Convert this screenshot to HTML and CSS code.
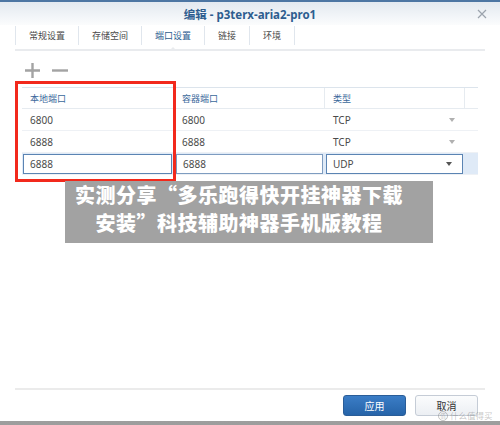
FILE: index.html
```html
<!DOCTYPE html>
<html lang="zh">
<head>
    <meta charset="UTF-8">
    <meta name="viewport" content="width=device-width, initial-scale=1.0">
    <title>编辑 - p3terx-aria2-pro1</title>
    <link rel="stylesheet" href="styles.css">
</head>
<body>
    <div class="window">
        <div class="titlebar">
            <span></span>
            <h1>编辑 - p3terx-aria2-pro1</h1>
            <span class="close">
                <svg width="10" height="10" viewBox="0 0 10 10"><path d="M1 1L9 9M9 1L1 9" stroke="#9ba3ad" stroke-width="1.2" fill="none"/></svg>
            </span>
        </div>

        <div class="tabs">
            <div class="tab">常规设置</div>
            <div class="tab">存储空间</div>
            <div class="tab active">端口设置</div>
            <div class="tab">链接</div>
            <div class="tab">环境</div>
        </div>

        <div class="content">
            <div class="toolbar">
                <span class="tool">
                    <svg width="15" height="15" viewBox="0 0 15 15"><path d="M7.5 0V15M0 7.5H15" stroke="#a3a3a3" stroke-width="2.4" fill="none"/></svg>
                </span>
                <span class="tool">
                    <svg width="16" height="15" viewBox="0 0 16 15"><path d="M0 7.5H16" stroke="#a3a3a3" stroke-width="2.4" fill="none"/></svg>
                </span>
            </div>

            <div class="grid">
                <div class="row head">
                    <div class="cell">本地端口</div>
                    <div class="cell">容器端口</div>
                    <div class="cell">类型</div>
                    <div class="cell"></div>
                </div>
                <div class="row">
                    <div class="cell">6800</div>
                    <div class="cell">6800</div>
                    <div class="cell type">TCP <span class="caret"></span></div>
                    <div class="cell"></div>
                </div>
                <div class="row">
                    <div class="cell">6888</div>
                    <div class="cell">6888</div>
                    <div class="cell type">TCP <span class="caret"></span></div>
                    <div class="cell"></div>
                </div>
                <div class="row selected">
                    <div class="cell"><div class="field w1">6888</div></div>
                    <div class="cell"><div class="field w2">6888</div></div>
                    <div class="cell"><div class="field w3 select">UDP <span class="caret dark"></span></div></div>
                    <div class="cell"></div>
                </div>
            </div>
        </div>

        <div class="footer">
            <button class="btn primary">应用</button>
            <button class="btn">取消</button>
        </div>

        <div class="mark-box"></div>

        <div class="banner">
            实测分享“多乐跑得快开挂神器下载<br>安装”科技辅助神器手机版教程
        </div>

        <div class="watermark"><span class="wm-icon">值</span>什么值得买</div>
    </div>
</body>
</html>
```

FILE: styles.css
```css
* {
    margin: 0;
    padding: 0;
    box-sizing: border-box;
}

body {
    width: 500px;
    height: 425px;
    overflow: hidden;
    background: linear-gradient(#c4c4c4, #9d9d9d);
    font-family: "Noto Sans", "Noto Sans CJK SC", sans-serif;
    color: #444;
}

.window {
    position: relative;
    width: 500px;
    height: 421px;
    background: white;
    display: flex;
    flex-direction: column;
}

.titlebar {
    height: 25px;
    border-top: 2px solid #4d76a3;
    background: linear-gradient(#e3e9f0, #fbfcfd);
    display: grid;
    grid-template-columns: 1fr auto 1fr;
    align-items: center;
}

.titlebar h1 {
    font-size: 11.5px;
    font-weight: 700;
    color: #2d5d8f;
}

.close {
    justify-self: end;
    margin-right: 13px;
    display: flex;
}

.tabs {
    margin: 1px 15px 0;
    height: 25px;
    border-bottom: 2px solid #e9ebee;
    display: flex;
}

.tab {
    position: relative;
    height: 19px;
    line-height: 19px;
    padding: 0 13px;
    font-size: 9px;
    color: #4a4a4a;
    border-left: 1px solid #e0e6ed;
}

.tab:last-child {
    border-right: 1px solid #e0e6ed;
}

.tab.active {
    color: #2d5d8f;
}

.tab.active::after {
    content: "";
    position: absolute;
    left: 50%;
    bottom: -6px;
    margin-left: -4px;
    border: 4px solid transparent;
    border-bottom: 4px solid #e9ebee;
    border-top: 0;
}

.content {
    padding: 0 22px;
}

.toolbar {
    display: flex;
    gap: 12px;
    padding: 12px 0 0 3px;
    height: 36px;
}

.tool {
    display: flex;
}

.grid {
    width: 456px;
    border-top: 1px solid #dce4ec;
}

.row {
    display: grid;
    grid-template-columns: 153px 150px 140px 13px;
    height: 22px;
    border-bottom: 1px solid #eef1f5;
    font-size: 10px;
    color: #4a4a4a;
}

.row.head {
    height: 21px;
    font-size: 9px;
    color: #3a689b;
    border-bottom-color: #e6ebf0;
}

.cell {
    display: flex;
    align-items: center;
    padding-left: 8px;
}

.row.head .cell {
    border-right: 1px solid #e6ebf0;
}

.row.head .cell:last-child {
    border-right: none;
}

.row .cell:nth-child(2) {
    padding-left: 7px;
}

.cell.type {
    justify-content: space-between;
    padding-right: 10px;
}

.caret {
    width: 0;
    height: 0;
    border-left: 3px solid transparent;
    border-right: 3px solid transparent;
    border-top: 4px solid #b0b0b0;
}

.caret.dark {
    border-top-color: #555;
}

.row.selected {
    background: #dfeaf7;
}

.row.selected .cell {
    padding-left: 1px;
}

.field {
    height: 20px;
    background: white;
    border: 1px solid #5b84b3;
    display: flex;
    align-items: center;
    padding-left: 6px;
}

.field.w1 { width: 149px; }
.field.w2 { width: 147px; border-color: #7e9cc0; }
.field.w3 { width: 137px; }

.field.select {
    justify-content: space-between;
    padding-right: 10px;
}

.footer {
    margin: auto 15px 0;
    border-top: 2px solid #ebebeb;
    padding: 5px 7px 5px 0;
    display: flex;
    justify-content: flex-end;
    gap: 9px;
}

.btn {
    width: 63px;
    height: 21px;
    border-radius: 3px;
    border: 1px solid #c5ccd6;
    background: linear-gradient(#fbfcfd, #eceff3);
    color: #333;
    font-family: "Noto Sans", "Noto Sans CJK SC", sans-serif;
    font-size: 10px;
}

.btn.primary {
    border-color: #2a5d98;
    background: linear-gradient(#3b7dc6, #2664a9);
    color: white;
}

.mark-box {
    position: absolute;
    left: 15px;
    top: 81px;
    width: 161px;
    height: 101px;
    border: 3px solid #f2291c;
}

.banner {
    position: absolute;
    left: 65px;
    top: 181px;
    width: 368px;
    height: 62px;
    padding-right: 20px;
    background: #a2a2a2;
    color: white;
    font-family: "Noto Sans CJK SC", sans-serif;
    font-weight: 900;
    font-size: 20px;
    letter-spacing: 0.5px;
    line-height: 28px;
    text-align: center;
}

.watermark {
    position: absolute;
    left: 438px;
    top: 411px;
    display: flex;
    align-items: center;
    gap: 2px;
    font-size: 8.5px;
    line-height: 10px;
    color: rgba(110, 110, 110, 0.4);
}

.wm-icon {
    width: 10px;
    height: 10px;
    border-radius: 50%;
    border: 1px solid rgba(110, 110, 110, 0.4);
    font-size: 6px;
    line-height: 8px;
    text-align: center;
}
```
